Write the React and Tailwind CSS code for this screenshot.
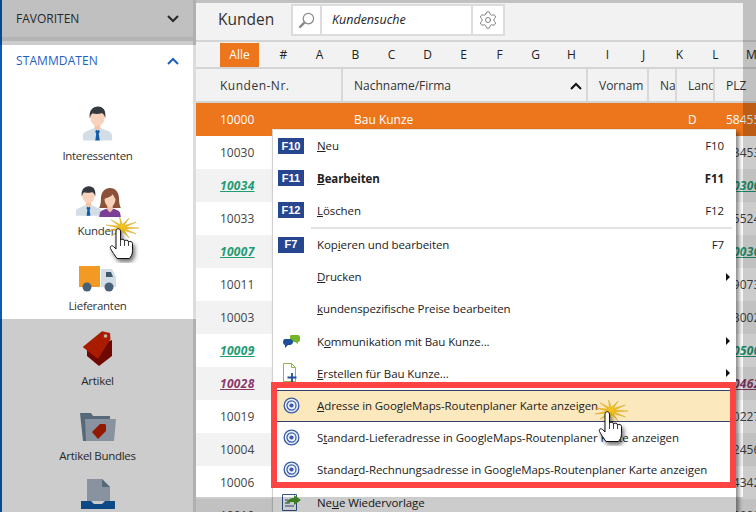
import React from 'react';
import { Settings } from 'lucide-react';

const letters = ['#', 'A', 'B', 'C', 'D', 'E', 'F', 'G', 'H', 'I', 'J', 'K', 'L', 'M'];

const rows = [
  { nr: '10030', plz: '93453' },
  { nr: '10034', plz: '30300', kind: 'green' },
  { nr: '10033', plz: '85524' },
  { nr: '10007', plz: '40030', kind: 'green' },
  { nr: '10011', plz: '29073' },
  { nr: '10003', plz: '53002' },
  { nr: '10009', plz: '50500', kind: 'green' },
  { nr: '10028', plz: '70462', kind: 'purple' },
  { nr: '10019', plz: '40227' },
  { nr: '10004', plz: '72456' },
  { nr: '10006', plz: '64342' },
  { nr: '10010', plz: '50000' },
];

const PersonMan = ({ className }) => (
  <svg viewBox="0 0 32 36" className={className}>
    <path d="M1 35v-5c0-3 2-4 5-5l7-3h6l7 3c3 1 5 2 5 5v5z" fill="#d3dde6" />
    <path d="M14.5 24h3l.8 2-1 2 1 7h-4.600l1-7-1-2z" fill="#0f5ca8" />
    <path d="M13 17h6v6l-3 2-3-2z" fill="#f3c4ab" />
    <ellipse cx="16" cy="11" rx="7.500" ry="9" fill="#f8d2bc" />
    <path d="M8 12C7 4 11 0 16.500 0S25 4 24 12c-1-3-2-5-4-5-3 1-7 1-9 0-2 1-2 3-3 5z" fill="#33393f" />
  </svg>
);

const PersonWoman = ({ className }) => (
  <svg viewBox="0 0 24 32" className={className}>
    <path d="M12 0c7 0 10 6 10 12 0 5 1 8 2 10H0c1-2 2-5 2-10C2 6 5 0 12 0z" fill="#8b5239" />
    <path d="M0 32l1-5c1-2 4-3 7-4h8c3 1 6 2 7 4l1 5z" fill="#7c3f98" />
    <path d="M9 18h6v6l-3 3-3-3z" fill="#f3c4ab" />
    <path d="M6 12c2-1 7-2 9-5 1 2 2 4 3 5 0 5-3 9-6 9s-6-4-6-9z" fill="#f8d2bc" />
  </svg>
);

const Truck = () => (
  <svg viewBox="0 0 38 26" className="w-[38px] h-[26px]">
    <path d="M0 0h21v21H0z" fill="#f39a25" />
    <path d="M22 3h11l4 8v10H22z" fill="#d3dde6" />
    <path d="M27 6h5l2 5h-7z" fill="#3f5a6c" />
    <circle cx="8" cy="21" r="4.500" fill="#46627a" />
    <circle cx="30" cy="21" r="4.500" fill="#46627a" />
  </svg>
);

const Tag = () => (
  <svg viewBox="0 0 32 36" className="w-[32px] h-[36px]">
    <path d="M5 18l25-9v16l-13 10-12-10z" fill="#8a0a00" />
    <path d="M.7 16L20 .3l8 1.700.5 6L16 28z" fill="#d42400" />
    <circle cx="23.500" cy="5" r="1.800" fill="#f6e3dc" />
  </svg>
);

const FolderTag = () => (
  <svg viewBox="0 0 36 30" className="w-[36px] h-[30px]">
    <path d="M0 1h11l2 3h17v4H6v21H3z" fill="#6b8496" />
    <path d="M5 7h31l-2 22H6z" fill="#aab8c7" />
    <path d="M12 20l8-8 5 0 1 1v6l-8 8z" fill="#b71f00" />
  </svg>
);

const DocBlue = () => (
  <svg viewBox="0 0 36 30" className="w-[36px] h-[30px]">
    <path d="M7 0h15l8 8v14H7z" fill="#aab8c7" />
    <path d="M22 0l8 8h-8z" fill="#6b8496" />
    <path d="M1 22h10l3 3h8l3-3h10v8H1z" fill="#0f5ca8" />
  </svg>
);

const Target = () => (
  <svg viewBox="0 0 18 18" className="w-[17px] h-[17px]">
    <circle cx="9" cy="9" r="7.800" fill="#eef2fa" stroke="#3a5ca8" strokeWidth="1.400" />
    <circle cx="9" cy="9" r="4.800" fill="none" stroke="#3a5ca8" strokeWidth="1.300" />
    <circle cx="9" cy="9" r="2.200" fill="#3a5ca8" />
  </svg>
);

const ChatIcon = () => (
  <svg viewBox="0 0 17 13" className="w-[17px] h-[13px]">
    <path d="M7 1c0-1 1-1 2-1h6c1 0 2 1 2 2v3c0 1-1 2-2 2v2l-3-2H9C8 7 7 6 7 5z" fill="#74b52d" />
    <path d="M2 4h5c1 0 3 1 3 3s-2 3-3 3H5l-3 3v-3C1 10 0 9 0 7s1-3 2-3z" fill="#1e4f9c" />
  </svg>
);

const DocPlus = () => (
  <svg viewBox="0 0 15 20" className="w-[15px] h-[20px]">
    <path d="M.5.500h8l4 4v14H.500z" fill="#fff" stroke="#8cb84a" />
    <path d="M8.500.500v4h4" fill="none" stroke="#8cb84a" />
    <path d="M9 10v9M4.500 14.500h9" stroke="#1e4f9c" strokeWidth="1.800" />
  </svg>
);

const FollowUp = () => (
  <svg viewBox="0 0 19 17" className="w-[19px] h-[17px]">
    <path d="M.5.500h14v16H.500z" fill="#fff" stroke="#34568f" />
    <path d="M3 6h3M3 9h5M3 12h9" stroke="#34568f" />
    <path d="M4 10c1-4 4-6 8-6V1l7 5-7 5V8c-3 0-6 0-8 2z" fill="#4c9b2e" />
  </svg>
);

// Stern mit duennen Zacken um (16, 11)
const starPoints = Array.from({ length: 22 }, (_, i) => {
  const a = (i * Math.PI) / 11;
  const rx = i % 2 === 0 ? 17 : 3.5;
  const ry = i % 2 === 0 ? 11 : 3.5;
  return `${(16 + rx * Math.cos(a)).toFixed(1)},${(11 + ry * Math.sin(a)).toFixed(1)}`;
}).join(' ');

// Klick-Cursor mit gelbem Stern, liegt ueber dem Inhalt
const HandCursor = ({ className }) => (
  <svg viewBox="0 0 34 46" className={className}>
    <polygon points={starPoints} fill="#f4c21f" stroke="#c79a10" strokeWidth=".4" />
    <path
      className="drop-shadow-[2px_3px_2px_rgba(0,0,0,0.55)]"
      d="M10 14c0-3 4.500-3 4.500 0v9c1.500-1.500 4-1 4 1 1.500-1.500 4-1 4 1 1.500-1 4-.500 4 1.500v7c0 4-1.500 6-3 8H11c-2-3-5-7-6.500-10-1-2.500 1.500-3.500 3-2l2.500 2.500z"
      fill="#fff"
      stroke="#111"
      strokeWidth="1"
    />
    <path d="M14.500 23v6M18.500 24v5M22.500 25v4" stroke="#111" strokeWidth=".8" />
  </svg>
);

const NavItem = ({ label, children }) => (
  <div className="h-[75px] flex flex-col items-center justify-end shrink-0">
    <div className="flex-1 flex items-end justify-center">{children}</div>
    <span className="mt-[6px] text-[11.500px] leading-[16px] tracking-[-0.3px] text-[#333]">{label}</span>
  </div>
);

const Sidebar = () => (
  <div className="w-[196px] shrink-0 h-full flex flex-col border-l-2 border-l-[#0a5cb8] border-r-[3px] border-r-[#dcdcdc] bg-white overflow-hidden">
    <div className="h-[41px] shrink-0 flex items-center justify-between pl-[14px] pr-[14px] bg-[#f0f0f0] border-b-[4px] border-b-[#e0e0e0] text-[12px] text-[#333]">
      <span>FAVORITEN</span>
      <svg viewBox="0 0 12 8" className="w-[12px] h-[8px]"><path d="M1 1l5 5 5-5" fill="none" stroke="#333" strokeWidth="2" /></svg>
    </div>
    <div className="h-[48px] shrink-0 flex items-center justify-between pl-[14px] pr-[14px] pb-[8px] text-[12px] tracking-[0.1px] text-[#1f5fc4]">
      <span>STAMMDATEN</span>
      <svg viewBox="0 0 12 8" className="w-[12px] h-[8px]"><path d="M1 7l5-5 5 5" fill="none" stroke="#1f5fc4" strokeWidth="2" /></svg>
    </div>
    <NavItem label="Interessenten"><PersonMan className="w-[31px] h-[36px]" /></NavItem>
    <NavItem label="Kunden">
      <div className="flex items-end">
        <PersonMan className="w-[27px] h-[31px]" />
        <PersonWoman className="w-[22px] h-[29px] -ml-[3px]" />
      </div>
    </NavItem>
    <NavItem label="Lieferanten"><Truck /></NavItem>
    <NavItem label="Artikel"><Tag /></NavItem>
    <NavItem label="Artikel Bundles"><FolderTag /></NavItem>
    <div className="pt-[15px] flex justify-center shrink-0"><DocBlue /></div>
  </div>
);

const Toolbar = () => (
  <div className="h-[42px] shrink-0 pt-[4px] pl-[22px] flex items-start bg-[#f2f2f2] border-b-2 border-b-[#d4d4d4]">
    <span className="w-[73px] h-[32px] flex items-center text-[15.500px] font-medium text-[#333]">Kunden</span>
    <div className="w-[214px] h-[32px] flex bg-white border-2 border-[#dcdcdc]">
      <div className="w-[29px] flex items-center justify-center border-r-2 border-r-[#dcdcdc]">
        <svg viewBox="0 0 18 18" className="w-[17px] h-[17px]">
          <circle cx="11" cy="7" r="5.500" fill="none" stroke="#888" strokeWidth="1.300" />
          <path d="M7 11l-5.500 5.500" stroke="#888" strokeWidth="2.400" />
        </svg>
      </div>
      <span className="w-[151px] pl-[10px] flex items-center italic text-[12.500px] text-[#222] border-r-2 border-r-[#dcdcdc]">Kundensuche</span>
      <div className="flex-1 flex items-center justify-center">
        <Settings size={20} strokeWidth={1} color="#666" />
      </div>
    </div>
  </div>
);

const Alphabet = () => (
  <div className="h-[27px] shrink-0 flex items-center pl-[24px] bg-[#f2f2f2] border-b-2 border-b-[#d4d4d4] text-[12px] text-[#222] overflow-hidden">
    <span className="w-[39px] h-[24px] mr-[6.500px] shrink-0 flex items-center justify-center bg-[#ed751b] text-white">Alle</span>
    {letters.map((l) => (
      <span key={l} className="w-[36px] shrink-0 text-center">{l}</span>
    ))}
  </div>
);

const cols = 'grid grid-cols-[147px_245px_61px_28px_38px_1fr]';

const HeadCell = ({ children, className }) => (
  <div className={`pl-[11px] pt-[2px] flex items-center overflow-hidden whitespace-nowrap border-r-2 border-r-[#d8d8d8] ${className || ''}`}>{children}</div>
);

const TableHead = () => (
  <div className={`${cols} h-[34px] shrink-0 bg-[#f2f2f2] border-b-2 border-b-[#d4d4d4] text-[12px] font-medium text-[#333]`}>
    <HeadCell className="pl-[24px] tracking-[0.5px]">Kunden-Nr.</HeadCell>
    <HeadCell className="justify-between pr-[4px]">
      <span>Nachname/Firma</span>
      <svg viewBox="0 0 12 8" className="w-[12px] h-[8px]"><path d="M1 7l5-5 5 5" fill="none" stroke="#111" strokeWidth="2" /></svg>
    </HeadCell>
    <HeadCell>Vornam</HeadCell>
    <HeadCell>Na</HeadCell>
    <HeadCell>Land</HeadCell>
    <div className="pl-[11px] pt-[2px] flex items-center">PLZ</div>
  </div>
);

const Row = ({ row, odd }) => {
  const styled =
    row.kind === 'green'
      ? 'font-bold italic underline tracking-[0.3px] text-[#1f9c75]'
      : row.kind === 'purple'
        ? 'font-bold italic underline tracking-[0.3px] text-[#8a3a6a]'
        : 'text-[#444]';
  return (
    <div className={`${cols} h-[33px] shrink-0 items-center text-[12px] ${odd ? 'bg-[#f2f2f2]' : 'bg-white'}`}>
      <span className={`pl-[24px] ${styled}`}>{row.nr}</span>
      <span />
      <span />
      <span />
      <span />
      <span className={`pl-[11px] ${styled}`}>{row.plz}</span>
    </div>
  );
};

const MenuItem = ({ icon, badge, label, keyName, arrow, bold, active }) => (
  <div className={`h-[32.200px] shrink-0 flex items-center text-[11.500px] tracking-[-0.09px] text-[#222] ${bold ? 'font-bold' : ''} ${active ? 'bg-[#fce8bd] border-y border-y-[#34406f]' : ''}`}>
    <div className="w-[44px] pl-[5px] shrink-0 flex items-center">
      {badge && (
        <span className="w-[26px] h-[16px] flex items-center justify-center bg-[#26478f] text-white text-[11px] tracking-normal font-bold font-['Liberation_Sans',sans-serif]">{badge}</span>
      )}
      {icon}
    </div>
    <span className="flex-1 whitespace-nowrap">{label}</span>
    {keyName && <span className="mr-[12px]">{keyName}</span>}
    {arrow && <span className="mr-[6px] w-0 h-0 border-y-[4px] border-y-transparent border-l-[4px] border-l-[#111]" />}
  </div>
);

const ContextMenu = () => (
  <div className="absolute left-[272px] top-[129px] w-[464px] h-[383px] flex flex-col bg-white border-l border-l-[#cfcfcf] border-t border-t-[#e6e6e6] shadow-[3px_3px_4px_rgba(0,0,0,0.45)] overflow-hidden">
    <MenuItem badge="F10" label={<><u>N</u>eu</>} keyName="F10" />
    <MenuItem badge="F11" label={<><u>B</u>earbeiten</>} keyName="F11" bold />
    <MenuItem badge="F12" label={<><u>L</u>öschen</>} keyName="F12" />
    <div className="h-[2px] shrink-0 ml-[38px] mr-[4px] bg-[#e2e2e2]" />
    <MenuItem badge="F7" label={<>Kop<u>i</u>eren und bearbeiten</>} keyName="F7" />
    <MenuItem label={<><u>D</u>rucken</>} arrow />
    <MenuItem label={<><u>k</u>undenspezifische Preise bearbeiten</>} />
    <MenuItem icon={<span className="ml-[5px]"><ChatIcon /></span>} label={<>K<u>o</u>mmunikation mit Bau Kunze...</>} arrow />
    <MenuItem icon={<span className="ml-[5px]"><DocPlus /></span>} label={<><u>E</u>rstellen für Bau Kunze...</>} arrow />
    <MenuItem active icon={<span className="ml-[5px]"><Target /></span>} label={<><u>A</u>dresse in GoogleMaps-Routenplaner Karte anzeigen</>} />
    <MenuItem icon={<span className="ml-[5px]"><Target /></span>} label={<>S<u>t</u>andard-Lieferadresse in GoogleMaps-Routenplaner Karte anzeigen</>} />
    <MenuItem icon={<span className="ml-[5px]"><Target /></span>} label={<>Standa<u>r</u>d-Rechnungsadresse in GoogleMaps-Routenplaner Karte anzeigen</>} />
    <MenuItem icon={<span className="ml-[4px]"><FollowUp /></span>} label={<>Ne<u>u</u>e Wiedervorlage</>} />
  </div>
);

export default function App() {
  return (
    <div className="relative w-[756px] h-[512px] flex overflow-hidden bg-white font-['Open_Sans','Noto_Sans',sans-serif]">
      <Sidebar />
      <div className="flex-1 min-w-0 flex flex-col">
        <Toolbar />
        <Alphabet />
        <TableHead />
        <div className={`${cols} h-[33px] shrink-0 items-center bg-[#ed751b] text-white text-[12px]`}>
          <span className="pl-[24px]">10000</span>
          <span className="pl-[11px]">Bau Kunze</span>
          <span />
          <span />
          <span className="pl-[11px]">D</span>
          <span className="pl-[11px]">58455</span>
        </div>
        {rows.map((row, i) => (
          <Row key={row.nr} row={row} odd={i % 2 === 1} />
        ))}
      </div>

      <ContextMenu />

      {/* abgedunkelte Bereiche um den Ausschnitt */}
      <div className="absolute left-0 top-0 w-[756px] h-[3px] bg-black/20" />
      <div className="absolute left-0 top-[3px] w-[196px] h-[42px] bg-black/20" />
      <div className="absolute left-0 top-[319px] w-[196px] h-[193px] bg-black/20" />
      <div className="absolute left-[743px] top-[3px] w-[13px] h-[494px] bg-black/20" />
      <div className="absolute left-[196px] top-[497px] w-[560px] h-[15px] bg-black/20" />

      <div className="absolute left-[271px] top-[382px] w-[465px] h-[106px] border-[6px] border-[#ff4444]" />
      <HandCursor className="absolute left-[106px] top-[217px] w-[34px] h-[46px]" />
      <HandCursor className="absolute left-[595px] top-[400px] w-[34px] h-[46px]" />
    </div>
  );
}
